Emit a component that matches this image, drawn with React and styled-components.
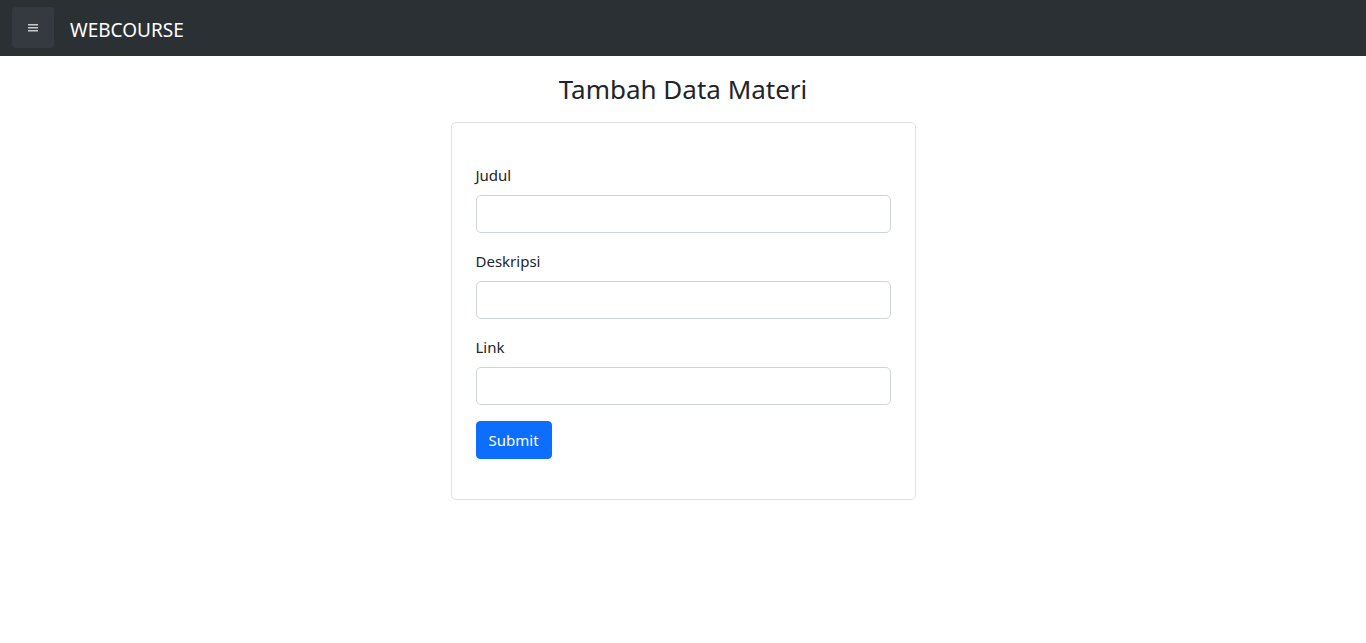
import React from 'react';
import styled, { createGlobalStyle } from 'styled-components';

const GlobalStyle = createGlobalStyle`
  * { box-sizing: border-box; }
  body {
    margin: 0;
    background: #fff;
    color: #212529;
    font-family: "Segoe UI", "Noto Sans", sans-serif;
    font-size: 15px;
    line-height: 24px;
  }
`;

const Navbar = styled.nav`
  height: 56px;
  background: #2b3035;
  display: flex;
  align-items: center;
  padding: 0 12px;
  gap: 16px;
`;

const Toggler = styled.button`
  width: 42px;
  height: 41px;
  border: none;
  border-radius: 4px;
  background: #343a40;
  display: flex;
  align-items: center;
  justify-content: center;
  padding: 0;
  margin-top: -1px;
  cursor: pointer;
`;

const Brand = styled.a`
  color: #fff;
  font-size: 19px;
  text-decoration: none;
  line-height: 30px;
  margin-top: 4px;
`;

const Main = styled.main`
  display: flex;
  flex-direction: column;
  align-items: center;
  padding-top: 18px;
`;

const Title = styled.h3`
  margin: 0 0 17px;
  font-size: 26px;
  font-weight: 400;
  line-height: 31px;
`;

const Card = styled.div`
  width: 465px;
  border: 1px solid #dee2e6;
  border-radius: 5px;
  padding: 40px 24px;
`;

const Field = styled.div`
  margin-bottom: 16px;
`;

const Label = styled.label`
  display: block;
  margin-bottom: 8px;
`;

const Input = styled.input`
  display: block;
  width: 100%;
  height: 38px;
  border: 1px solid #ced4da;
  border-radius: 5px;
  padding: 6px 12px;
  font: inherit;
`;

const SubmitButton = styled.button`
  height: 38px;
  padding: 6px 12px;
  background: #0d6efd;
  color: #fff;
  border: 1px solid #0d6efd;
  border-radius: 4px;
  font: inherit;
  cursor: pointer;
`;

const MenuIcon = () => (
  <svg width="10" height="8" viewBox="0 0 10 8">
    <g fill="#c8c9cb">
      <rect x="0" y="0" width="10" height="1.5" />
      <rect x="0" y="3" width="10" height="1.5" />
      <rect x="0" y="6" width="10" height="1.5" />
    </g>
  </svg>
);

const fields = ['Judul', 'Deskripsi', 'Link'];

const App = () => (
  <>
    <GlobalStyle />
    <Navbar>
      <Toggler aria-label="menu"><MenuIcon /></Toggler>
      <Brand href="#">WEBCOURSE</Brand>
    </Navbar>
    <Main>
      <Title>Tambah Data Materi</Title>
      <Card>
        <form onSubmit={(e) => e.preventDefault()}>
          {fields.map((f) => (
            <Field key={f}>
              <Label htmlFor={f}>{f}</Label>
              <Input id={f} type="text" />
            </Field>
          ))}
          <SubmitButton type="submit">Submit</SubmitButton>
        </form>
      </Card>
    </Main>
  </>
);

export default App;
